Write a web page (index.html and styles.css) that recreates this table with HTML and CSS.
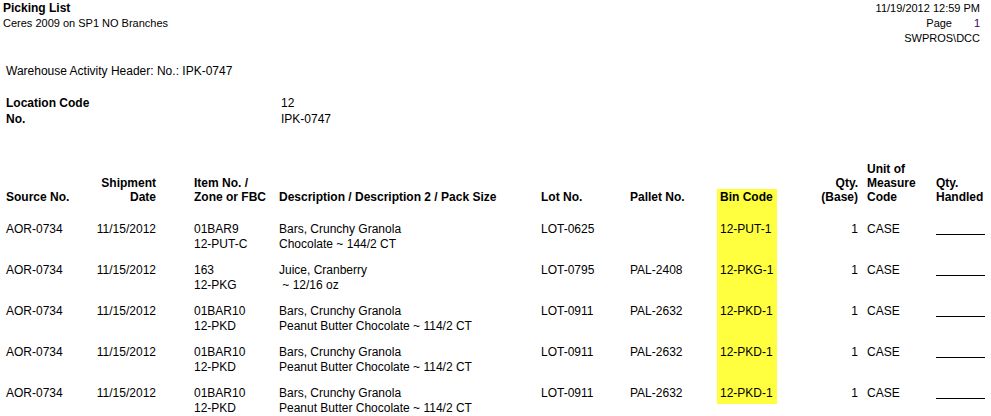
FILE: index.html
```html
<!DOCTYPE html>
<html>
<head>
<meta charset="utf-8">
<title>Picking List</title>
<link rel="stylesheet" href="styles.css">
</head>
<body>
<div class="report">
  <header class="top">
    <div class="top-left">
      <div class="title">Picking List</div>
      <div class="company">Ceres 2009 on SP1 NO Branches</div>
    </div>
    <div class="top-right">
      <div>11/19/2012 12:59 PM</div>
      <div>Page<span class="pagenum">1</span></div>
      <div>SWPROS\DCC</div>
    </div>
  </header>

  <div class="activity">Warehouse Activity Header: No.: IPK-0747</div>

  <div class="fields">
    <div class="flabel">Location Code</div><div class="fvalue">12</div>
    <div class="flabel">No.</div><div class="fvalue">IPK-0747</div>
  </div>

  <div class="table">
    <div class="thead">
      <div class="c c-src">Source No.</div>
      <div class="c c-ship">Shipment<br>Date</div>
      <div class="c c-item">Item No. /<br>Zone or FBC</div>
      <div class="c c-desc">Description / Description 2 / Pack Size</div>
      <div class="c c-lot">Lot No.</div>
      <div class="c c-pal">Pallet No.</div>
      <div class="c c-bin">Bin Code</div>
      <div class="c c-qty">Qty.<br>(Base)</div>
      <div class="c c-uom">Unit of<br>Measure<br>Code</div>
      <div class="c c-hand">Qty.<br>Handled</div>
    </div>

    <div class="trow">
      <div class="c c-src">AOR-0734</div>
      <div class="c c-ship">11/15/2012</div>
      <div class="c c-item">01BAR9<br>12-PUT-C</div>
      <div class="c c-desc">Bars, Crunchy Granola<br>Chocolate ~ 144/2 CT</div>
      <div class="c c-lot">LOT-0625</div>
      <div class="c c-pal"></div>
      <div class="c c-bin">12-PUT-1</div>
      <div class="c c-qty">1</div>
      <div class="c c-uom">CASE</div>
      <div class="c c-hand"><div class="blank"></div></div>
    </div>

    <div class="trow">
      <div class="c c-src">AOR-0734</div>
      <div class="c c-ship">11/15/2012</div>
      <div class="c c-item">163<br>12-PKG</div>
      <div class="c c-desc">Juice, Cranberry<br>&nbsp;~ 12/16 oz</div>
      <div class="c c-lot">LOT-0795</div>
      <div class="c c-pal">PAL-2408</div>
      <div class="c c-bin">12-PKG-1</div>
      <div class="c c-qty">1</div>
      <div class="c c-uom">CASE</div>
      <div class="c c-hand"><div class="blank"></div></div>
    </div>

    <div class="trow">
      <div class="c c-src">AOR-0734</div>
      <div class="c c-ship">11/15/2012</div>
      <div class="c c-item">01BAR10<br>12-PKD</div>
      <div class="c c-desc">Bars, Crunchy Granola<br>Peanut Butter Chocolate ~ 114/2 CT</div>
      <div class="c c-lot">LOT-0911</div>
      <div class="c c-pal">PAL-2632</div>
      <div class="c c-bin">12-PKD-1</div>
      <div class="c c-qty">1</div>
      <div class="c c-uom">CASE</div>
      <div class="c c-hand"><div class="blank"></div></div>
    </div>

    <div class="trow">
      <div class="c c-src">AOR-0734</div>
      <div class="c c-ship">11/15/2012</div>
      <div class="c c-item">01BAR10<br>12-PKD</div>
      <div class="c c-desc">Bars, Crunchy Granola<br>Peanut Butter Chocolate ~ 114/2 CT</div>
      <div class="c c-lot">LOT-0911</div>
      <div class="c c-pal">PAL-2632</div>
      <div class="c c-bin">12-PKD-1</div>
      <div class="c c-qty">1</div>
      <div class="c c-uom">CASE</div>
      <div class="c c-hand"><div class="blank"></div></div>
    </div>

    <div class="trow last">
      <div class="c c-src">AOR-0734</div>
      <div class="c c-ship">11/15/2012</div>
      <div class="c c-item">01BAR10<br>12-PKD</div>
      <div class="c c-desc">Bars, Crunchy Granola<br>Peanut Butter Chocolate ~ 114/2 CT</div>
      <div class="c c-lot">LOT-0911</div>
      <div class="c c-pal">PAL-2632</div>
      <div class="c c-bin">12-PKD-1</div>
      <div class="c c-qty">1</div>
      <div class="c c-uom">CASE</div>
      <div class="c c-hand"><div class="blank"></div></div>
    </div>
  </div>
</div>
</body>
</html>
```

FILE: styles.css
```css
html, body {
  margin: 0;
  padding: 0;
  background: #ffffff;
}

body {
  font-family: "Liberation Sans", Arial, sans-serif;
  font-size: 12px;
  line-height: 15px;
  color: #000000;
  overflow: hidden;
}

.report {
  width: 991px;
  height: 416px;
}

.top {
  display: flex;
  justify-content: space-between;
  padding: 1px 11px 0 3px;
  font-size: 11px;
}

.title {
  font-size: 12px;
  font-weight: bold;
}

.top-right {
  text-align: right;
}

.pagenum {
  display: inline-block;
  width: 28px;
  text-align: right;
  color: #400060;
}

.activity {
  margin-top: 18px;
  padding-left: 6px;
}

.fields {
  display: grid;
  grid-template-columns: 275px auto;
  margin-top: 16px;
  padding-left: 6px;
  line-height: 16px;
}

.flabel {
  font-weight: bold;
}

.table {
  margin-top: 35px;
  padding-left: 6px;
}

.thead,
.trow {
  display: grid;
  grid-template-columns: 80px 70px 123px 262px 89px 87px 60px 81px 78px 49px;
}

.thead .c {
  align-self: end;
  font-weight: bold;
  line-height: 14px;
  padding-bottom: 7px;
}

.thead .c-bin {
  padding-top: 1px;
}

.trow .c {
  padding-top: 11px;
}

.c-ship,
.c-qty {
  text-align: right;
}

.c-item {
  padding-left: 38px;
}

.c-bin {
  padding-left: 3px;
  background: #ffff40;
}

.c-uom {
  padding-left: 9px;
}

.trow.last .c-bin {
  align-self: start;
  padding-bottom: 3px;
}

.blank {
  height: 12px;
  border-bottom: 1px solid #000000;
}
```
